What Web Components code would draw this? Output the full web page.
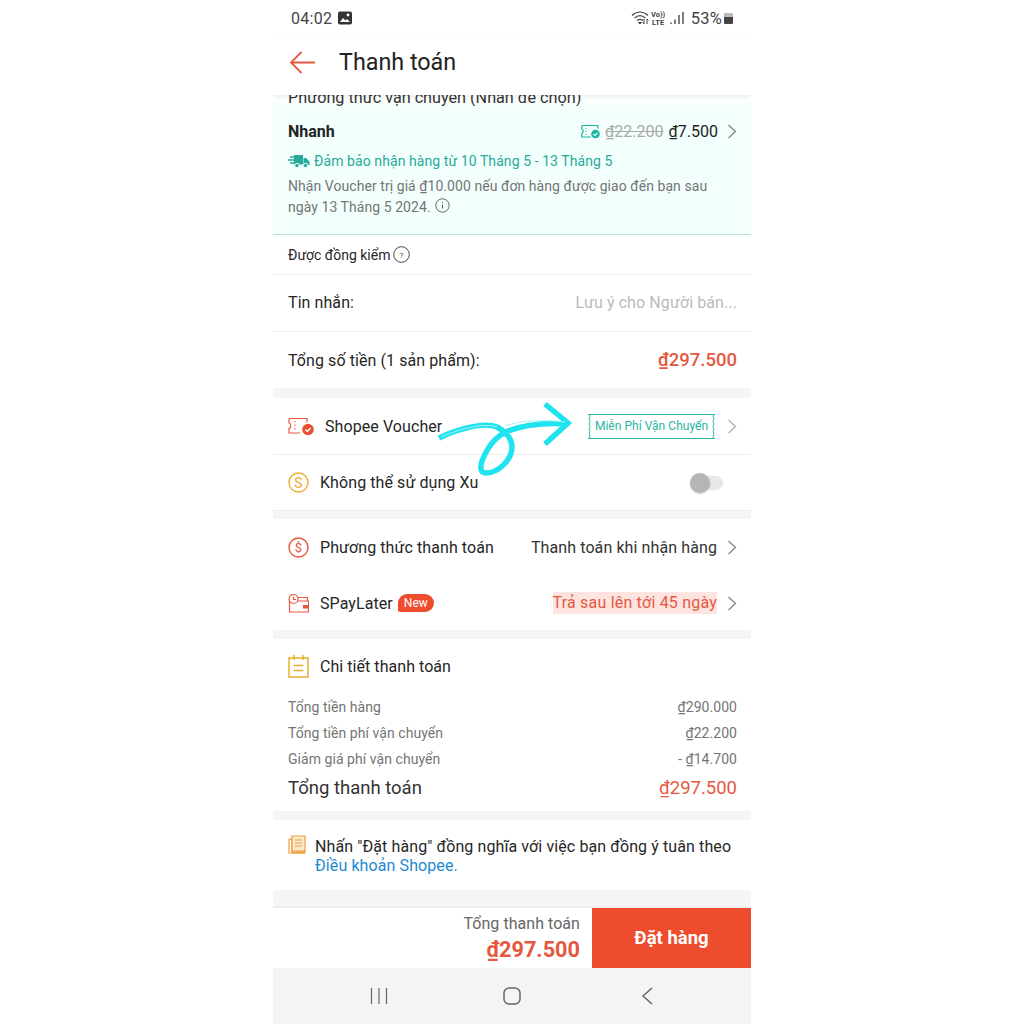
<!DOCTYPE html>
<html lang="vi"><head><meta charset="utf-8"><style>
html,body{margin:0;background:#fff;font-family:Roboto,"Liberation Sans",sans-serif;color:#262626}
</style></head><body>
<x-checkout></x-checkout>
<script>
const chev=(c='#808080')=>`<svg width="10" height="15" viewBox="0 0 10 15" fill="none" stroke="${c}" stroke-width="1.200"><path d="M1.500 1l7 6.500-7 6.500"/></svg>`;
const icons={
 back:`<svg width="27" height="23" viewBox="0 0 27 23" fill="none" stroke="#e5583f" stroke-width="1.800"><path d="M26 11.500H2M12.500 1L2 11.500 12.500 22"/></svg>`,
 img:`<svg width="14" height="14" viewBox="0 0 14 14"><rect width="14" height="13" y=".5" rx="2" fill="#333"/><circle cx="10" cy="4" r="1.400" fill="#fff"/><path d="M2 11l3-4 2.500 2.500L9 8l3 3z" fill="#fff"/></svg>`,
 status:`<svg width="59" height="16" viewBox="-2 0 59 16" fill="none"><path d="M1 5.500c5-4.500 11-4.500 16 0M3.500 8c3.500-3 7.500-3 11 0M6 10.500c2-1.500 4-1.500 6 0" stroke="#444" stroke-width="1.200"/><path d="M9 14l-1.500-1.500h3zM13 9v5M11.500 12.500l1.500 1.500M16 14V9l1.500 1.500" stroke="#444" stroke-width="1"/><path d="M40 12.500v1.500M44 9.500v4.500M48 5v9M52 2v12" stroke="#555" stroke-width="1.500"/></svg>`,
 tkt:`<svg width="19" height="15" viewBox="0 0 19 15" fill="none"><path d="M.8 1.500h16v3M.8 1.500v3.500a2.500 2.500 0 0 1 0 4.500v3.500h9" stroke="#1fb5a0" stroke-width="1.200"/><path d="M5 4v1M5 7v1M5 10v1" stroke="#1fb5a0"/><circle cx="14.500" cy="10" r="4.300" fill="#1fb5a0"/><path d="M12.500 10l1.500 1.500 2.500-2.700" stroke="#fff" stroke-width="1.100"/></svg>`,
 truck:`<svg width="22" height="14" viewBox="0 0 22 14"><path d="M6 1h9v9.500H6zM15.500 4H18l3.500 3.500v3.500h-6z" fill="#26aa99"/><circle cx="9" cy="11.500" r="2.200" fill="#26aa99" stroke="#f3fffd"/><circle cx="17.500" cy="11.500" r="2.200" fill="#26aa99" stroke="#f3fffd"/><path d="M2 3h7M0 6h7M2 9h5" stroke="#26aa99" stroke-width="1.300"/></svg>`,
 info:`<svg width="15" height="15" viewBox="0 0 15 15" fill="none"><circle cx="7.500" cy="7.500" r="6.700" stroke="#555" stroke-width=".9"/><path d="M7.500 4v1M7.500 6.500v4" stroke="#555"/></svg>`,
 help:`<svg width="17" height="17" viewBox="0 0 17 17" fill="none"><circle cx="8.500" cy="8.500" r="7.800" stroke="#444"/><text x="8.500" y="11.500" font-size="8" text-anchor="middle" fill="#555" font-family="Roboto">?</text></svg>`,
 voucher:`<svg width="26" height="19" viewBox="0 0 26 19" fill="none"><path d="M1 1.500h18v4M1 1.500v4.500a3 3 0 0 1 0 5.500v4.500h11" stroke="#e5583f" stroke-width="1.200"/><path d="M7 4v1.500M7 7.500v1.500M7 11v1.500" stroke="#e5583f"/><circle cx="20" cy="12.500" r="5.800" fill="#e8502f"/><path d="M17.300 12.500l2 2 3.300-3.500" stroke="#fff" stroke-width="1.300"/></svg>`,
 coin:`<svg width="21" height="21" viewBox="0 0 21 21" fill="none"><circle cx="10.500" cy="10.500" r="9.500" stroke="#eeb035" stroke-width="1.400"/><text x="10.500" y="15.500" font-size="14" text-anchor="middle" fill="#eeb035" font-family="Roboto">S</text></svg>`,
 dollar:`<svg width="21" height="21" viewBox="0 0 21 21" fill="none"><circle cx="10.500" cy="10.500" r="9.500" stroke="#e5583f" stroke-width="1.400"/><text x="10.500" y="15" font-size="13" text-anchor="middle" fill="#e5583f" font-family="Roboto">$</text></svg>`,
 wallet:`<svg width="21" height="19" viewBox="0 0 21 19" fill="none" stroke="#e5583f" stroke-width="1.200"><path d="M8 3.500h11.500V7M1.500 7h19v11h-19z"/><circle cx="5.500" cy="5" r="4.500" fill="#fff"/><path d="M5.500 2.500V5.500h2.500"/><path d="M15.500 11.500h5v2.500h-5z" fill="#e5583f"/></svg>`,
 bill:`<svg width="21" height="23" viewBox="0 0 21 23" fill="none" stroke="#e8ae2c" stroke-width="1.500"><path d="M1 3h19v19H1zM6 0v5M15 0v5M5.500 10.500h10M5.500 15.500h10"/></svg>`,
 note:`<svg width="18" height="19" viewBox="0 0 18 19" fill="none" stroke="#eba047" stroke-width="1.200" style="flex:none"><path d="M1 4h3v14h13v-2" fill="#f2b56b"/><path d="M1 4v14h16" /><path d="M4 1h13v15H4z" fill="#fde9c8"/><path d="M7 5h7M7 8h7M7 11h7"/></svg>`
};
function def(name,css,html){customElements.define(name,class extends HTMLElement{constructor(){super();this.attachShadow({mode:'open'}).innerHTML=`<style>${css}</style>`+(typeof html==='function'?html(this):html)}})}

def('x-status',`:host{display:flex;align-items:center;height:36px;padding:0 18px;flex:none;color:#444;font-size:16px}
 .t{letter-spacing:.3px;margin-right:6px}.s{flex:1}svg{display:block}.r{letter-spacing:.2px;margin-left:3px;font-size:16.500px}
 .lte{position:absolute;left:378px;top:11px;font:700 7.500px/7.500px Roboto;color:#444;text-align:center}
 .bat{width:9px;height:11px;background:linear-gradient(#bbb 40%,#444 40%);border-radius:1px;margin-left:2px}`,
 `<span class="t">04:02</span>${icons.img}<span class="s"></span>${icons.status}<span class="lte">Vo))<br>LTE</span><span class="r">53%</span><span class="bat"></span>`);

def('x-appbar',`:host{display:flex;align-items:center;height:59px;padding:0 0 7px 16px;box-sizing:border-box;gap:23px;flex:none;background:#fff;font-size:23.300px;color:#222;position:relative;z-index:2;box-shadow:0 2px 4px rgba(0,0,0,.08)}svg{display:block;margin-top:1px}`,
 `${icons.back}<span>Thanh toán</span>`);

def('x-row',`:host{display:flex;align-items:center;padding:0 14px var(--pb,0) 15px;background:#fff;font-size:16px;letter-spacing:.08px;color:#262626;height:var(--h,56px);box-sizing:border-box;border-bottom:var(--b,0)}
 .i{display:flex;margin-right:var(--ig,11px)}.i:empty{display:none}.m{flex:1;display:flex;align-items:center}.c{margin-left:10px;display:flex}`,
 el=>`<span class="i">${icons[el.getAttribute('icon')]||''}</span><span class="m"><slot></slot></span><slot name="right"></slot>${el.hasAttribute('chev')?`<span class="c">${chev(el.getAttribute('chev')||undefined)}</span>`:''}`);

def('x-gap',`:host{display:block;background:#f5f5f5;height:var(--h,9px)}`,``);

def('x-shipping',`:host{display:block;background:#f3fffd;border-bottom:1px solid #b9e2da}
 .clip{background:linear-gradient(#fff,#f7fffe);height:11px;overflow:hidden;font-size:16.200px;line-height:18px;padding-left:15px;color:#333}
 .clip span{display:block;margin-top:-6px}
 .n{display:flex;align-items:center;padding:0 14px 0 15px;height:21px;margin-top:15px}
 b{flex:1;font-weight:700;font-size:16px;color:#222}
 .old{color:#aaa;text-decoration:line-through;margin:0 5px 0 5px;font-size:16px}.new{font-size:16px;color:#222}
 .c{margin-left:9px;display:flex}svg{display:block}
 .g{display:flex;align-items:center;gap:4px;color:#26aa99;font-size:14px;letter-spacing:.08px;padding-left:15px;margin-top:9px;line-height:20px}
 .d{font-size:14px;letter-spacing:.06px;color:#757575;line-height:21px;padding:5px 40px 16px 15px}
 .d svg{display:inline-block;vertical-align:-1px;margin-left:1px}`,
 `<div class="clip"><span>Phương thức vận chuyển (Nhấn để chọn)</span></div>
 <div class="n"><b>Nhanh</b>${icons.tkt}<span class="old">₫22.200</span><span class="new">₫7.500</span><span class="c">${chev()}</span></div>
 <div class="g">${icons.truck}<span>Đảm bảo nhận hàng từ 10 Tháng 5 - 13 Tháng 5</span></div>
 <div class="d">Nhận Voucher trị giá ₫10.000 nếu đơn hàng được giao đến bạn sau ngày 13 Tháng 5 2024. ${icons.info}</div>`);

def('x-ticket',`:host{display:block;margin-right:2px}
 .t{position:relative;font-size:12px;color:#1fb5a0;letter-spacing:.03px;height:25px;line-height:23px;width:127px;text-align:center;box-sizing:border-box;border-top:1.500px solid #2cb7a5;border-bottom:1.500px solid #2cb7a5}
 svg{position:absolute;top:-1px;height:25px;width:3px}`,
 `<div class="t"><svg style="left:0" viewBox="0 0 3 25" fill="none" stroke="#2cb7a5"><path d="M1 0l1 2.500-1 2.500 1 2.500-1 2.500 1 2.500-1 2.500 1 2.500-1 2.500 1 2.500-1 2.500"/></svg>Miễn Phí Vận Chuyển<svg style="right:0" viewBox="0 0 3 25" fill="none" stroke="#2cb7a5"><path d="M2 0l-1 2.500 1 2.500-1 2.500 1 2.500-1 2.500 1 2.500-1 2.500 1 2.500-1 2.500 1 2.500"/></svg></div>`);

def('x-toggle',`:host{display:block;width:33px;height:22px;position:relative}
 .tr{position:absolute;left:6px;right:0;top:4px;height:14px;background:#e8e8e8;border-radius:7px}
 .k{position:absolute;left:0;top:1px;width:20px;height:20px;border-radius:50%;background:#b5b5b5;box-shadow:0 1px 2px rgba(0,0,0,.2)}`,
 `<div class="tr"></div><div class="k"></div>`);

def('x-details',`:host{display:block;background:#fff;padding:0 14px 0 15px}
 .h{display:flex;align-items:center;gap:11px;height:55px;font-size:16px;letter-spacing:.05px;color:#262626}svg{display:block}
 .r{display:flex;justify-content:space-between;font-size:14px;letter-spacing:.05px;color:#757575;line-height:26px}
 .t{display:flex;justify-content:space-between;font-size:18.500px;color:#333;line-height:30px;padding:1px 0 8px}
 .t span+span{color:#e5583f}`,
 `<div class="h">${icons.bill}<span>Chi tiết thanh toán</span></div>
 <div class="rows"><div class="r"><span>Tổng tiền hàng</span><span>₫290.000</span></div>
 <div class="r"><span>Tổng tiền phí vận chuyển</span><span>₫22.200</span></div>
 <div class="r"><span>Giảm giá phí vận chuyển</span><span>- ₫14.700</span></div></div>
 <div class="t"><span>Tổng thanh toán</span><span>₫297.500</span></div>`);

def('x-terms',`:host{display:flex;gap:9px;background:#fff;padding:17px 14px 14px 15px;font-size:16px;letter-spacing:.1px;line-height:19px;color:#262626;height:70px;box-sizing:border-box}
 a{color:#1e88d0;text-decoration:none}svg{display:block;margin-top:-2px}`,
 `${icons.note}<div>Nhấn "Đặt hàng" đồng nghĩa với việc bạn đồng ý tuân theo <a>Điều khoản Shopee.</a></div>`);

def('x-bottom',`:host{display:flex;flex:none;height:62px;box-sizing:border-box;border-top:2px solid #eee;background:#fff;position:relative}
 .l{flex:1;text-align:right;padding:5px 12px 0 0;box-sizing:border-box}
 .a{font-size:16px;letter-spacing:.05px;color:#666;line-height:22px}.p{font-size:21.700px;font-weight:700;color:#e5583f;line-height:29px}
 .b{width:159px;background:#ee4d2d;color:#fff;font-weight:700;font-size:18.500px;display:flex;align-items:center;justify-content:center}`,
 `<div class="l"><div class="a">Tổng thanh toán</div><div class="p">₫297.500</div></div><div class="b">Đặt hàng</div>`);

def('x-nav',`:host{display:flex;flex:none;height:56px;background:#f4f4f4;align-items:center;padding-left:97px;box-sizing:border-box}
 svg{display:block}`,
 `<svg width="18" height="18" viewBox="0 0 18 18" stroke="#666" stroke-width="1.200" fill="none"><path d="M1.500 1v16M9 1v16M16.500 1v16"/></svg>
 <svg style="margin-left:115px" width="18" height="18" viewBox="0 0 18 18" stroke="#666" stroke-width="1.500" fill="none"><rect x="1" y="1" width="16" height="16" rx="5"/></svg>
 <svg style="margin-left:120px" width="12" height="18" viewBox="0 0 12 18" stroke="#666" stroke-width="1.500" fill="none"><path d="M11 1L2 9l9 8"/></svg>`);

def('x-arrow',`:host{position:absolute;left:157px;top:300px;pointer-events:none;z-index:1}svg{display:block}`,
 `<svg width="160" height="90" viewBox="430 395 160 90" fill="none" stroke-linecap="butt" stroke-linejoin="miter"><g stroke="#1fe3ef" stroke-width="5.500"><path d="M439 438c14-7 44-17 58-11 9 5 15 12 15 20 0 13-14 26-26 26-6 0-6-6-4-12 5-13 14-25 26-30 22-8 44-8 60-7"/><path d="M545 404l23 19-23 21"/></g><path d="M441 437c16-7 42-15 56-10M505 426c20-7 40-6 60-4" stroke="#a8f5f8" stroke-width="1"/></svg>`);

customElements.define('x-checkout',class extends HTMLElement{constructor(){super();this.attachShadow({mode:'open'}).innerHTML=`<style>
 :host{display:flex;flex-direction:column;width:478px;height:1024px;margin:0 auto;position:relative;overflow:hidden;background:#fff}
 .scroll{flex:1;min-height:0;overflow:hidden;position:relative}
 .ph{color:#bbb;font-size:16px;letter-spacing:.1px}.v{font-weight:500;font-size:18.500px;letter-spacing:0;color:#e5583f}
 .sm{font-size:14px;letter-spacing:0;color:#262626}
 .tag{background:#ee4d2d;color:#fff;font-size:12px;line-height:18px;padding:0 6px;border-radius:9px 9px 9px 2px;margin-left:5px;letter-spacing:0}
 .pink{background:#fde4e1;color:#e5583f;line-height:22px;letter-spacing:.2px}
 .dark{color:#333;letter-spacing:.1px}
 .q{margin-left:3px;display:flex}
 </style>
 <x-status></x-status>
 <x-appbar></x-appbar>
 <div class="scroll">
  <x-arrow></x-arrow>
  <x-shipping></x-shipping>
  <x-row style="--h:40px;--b:1px solid #eee"><span class="sm">Được đồng kiểm</span><span class="q">${icons.help}</span></x-row>
  <x-row style="--h:57px;--b:1px solid #eee;--pb:2px"><span>Tin nhắn:</span><span slot="right" class="ph">Lưu ý cho Người bán...</span></x-row>
  <x-row style="--h:56px"><span>Tổng số tiền (1 sản phẩm):</span><span slot="right" class="v">₫297.500</span></x-row>
  <x-gap style="--h:10px"></x-gap>
  <x-row icon="voucher" chev="#aaa" style="--h:57px;--b:1px solid #eee"><span>Shopee Voucher</span><x-ticket slot="right"></x-ticket></x-row>
  <x-row icon="coin" style="--h:56px;--b:1px solid #eee"><span>Không thể sử dụng Xu</span><x-toggle slot="right" style="margin-right:14px"></x-toggle></x-row>
  <x-gap style="--h:8px"></x-gap>
  <x-row icon="dollar" chev style="--h:57px"><span>Phương thức thanh toán</span><span slot="right" class="dark">Thanh toán khi nhận hàng</span></x-row>
  <x-row icon="wallet" chev style="--h:54px"><span>SPayLater</span><span class="tag">New</span><span slot="right" class="pink">Trả sau lên tới 45 ngày</span></x-row>
  <x-gap></x-gap>
  <x-details></x-details>
  <x-gap></x-gap>
  <x-terms></x-terms>
  <x-gap style="--h:20px"></x-gap>
 </div>
 <x-bottom></x-bottom>
 <x-nav></x-nav>`}});
</script>
</body></html>
